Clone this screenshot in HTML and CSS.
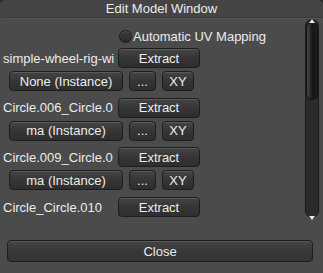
FILE: index.html
```html
<!DOCTYPE html>
<html lang="en">
<head>
    <meta charset="UTF-8">
    <meta name="viewport" content="width=device-width, initial-scale=1.0">
    <title>Edit Model Window</title>
    <link rel="stylesheet" href="styles.css">
</head>
<body>
    <div class="window">
        <div class="titlebar">Edit Model Window</div>

        <div class="pane">
            <div class="model-list">
                <div class="option">
                    <span class="radio"></span>Automatic UV Mapping
                </div>

                <div class="model-row">
                    <span class="model-name">simple-wheel-rig-wi</span>
                    <button class="btn btn-extract">Extract</button>
                </div>
                <div class="instance-row">
                    <button class="btn btn-instance">None (Instance)</button>
                    <button class="btn btn-more">...</button>
                    <button class="btn btn-xy">XY</button>
                </div>

                <div class="model-row">
                    <span class="model-name">Circle.006_Circle.0</span>
                    <button class="btn btn-extract">Extract</button>
                </div>
                <div class="instance-row">
                    <button class="btn btn-instance">ma (Instance)</button>
                    <button class="btn btn-more">...</button>
                    <button class="btn btn-xy">XY</button>
                </div>

                <div class="model-row">
                    <span class="model-name">Circle.009_Circle.0</span>
                    <button class="btn btn-extract">Extract</button>
                </div>
                <div class="instance-row">
                    <button class="btn btn-instance">ma (Instance)</button>
                    <button class="btn btn-more">...</button>
                    <button class="btn btn-xy">XY</button>
                </div>

                <div class="model-row">
                    <span class="model-name">Circle_Circle.010</span>
                    <button class="btn btn-extract">Extract</button>
                </div>
            </div>

            <div class="scrollbar">
                <span class="arrow arrow-up"></span>
                <div class="thumb"></div>
                <span class="arrow arrow-down"></span>
            </div>
        </div>

        <div class="footer">
            <button class="btn btn-close">Close</button>
        </div>
    </div>
</body>
</html>
```

FILE: styles.css
```css
* {
    margin: 0;
    padding: 0;
    box-sizing: border-box;
}

:root {
    --bg: #4b4b4b;
    --title-bg: #444444;
    --text: #ececec;
    --btn-border: #1d1d1d;
    --track: #2b2b2b;
}

body {
    width: 323px;
    height: 273px;
    overflow: hidden;
    background: #2a2a2a;
    font-family: "Liberation Sans", Arial, sans-serif;
    font-size: 13px;
    color: var(--text);
}

.window {
    width: 323px;
    height: 273px;
    background: var(--bg);
    border-radius: 6px 6px 0 0;
    display: flex;
    flex-direction: column;
}

.titlebar {
    height: 18px;
    line-height: 17px;
    text-align: center;
    background: var(--title-bg);
    border-radius: 6px 6px 0 0;
    border-bottom: 1px solid #3c3c3c;
}

.pane {
    height: 222px;
    display: flex;
    border-top: 1px solid #555;
    border-radius: 6px 6px 0 0;
}

.model-list {
    flex: 1;
    padding-left: 3px;
}

.option {
    display: flex;
    align-items: center;
    height: 14px;
    margin-top: 10px;
    margin-bottom: 5px;
    padding-left: 116px;
    white-space: nowrap;
}

.radio {
    width: 13px;
    height: 13px;
    margin-right: 1px;
    border-radius: 50%;
    border: 1px solid var(--btn-border);
    background: linear-gradient(#3c3c3c, #2b2b2b);
    box-shadow: inset 0 1px 0 rgba(255, 255, 255, 0.1);
}

.model-row {
    display: flex;
    align-items: center;
    height: 20px;
    margin-bottom: 3px;
}

.model-name {
    width: 115px;
    overflow: hidden;
    white-space: nowrap;
}

.instance-row {
    display: flex;
    gap: 6px;
    height: 20px;
    padding-left: 6px;
    margin-bottom: 6.7px;
}

.btn {
    height: 20px;
    font-family: inherit;
    font-size: 13px;
    color: var(--text);
    border: 1px solid var(--btn-border);
    border-radius: 4px;
    background: linear-gradient(#454545, #353535 50%, #2e2e2e);
    box-shadow: inset 0 1px 0 rgba(255, 255, 255, 0.12);
    text-align: center;
    cursor: pointer;
}

.btn-extract {
    width: 82px;
}

.btn-instance {
    width: 114px;
}

.btn-more {
    width: 27px;
}

.btn-xy {
    width: 32px;
}

.scrollbar {
    position: relative;
    width: 14px;
    height: 199px;
    margin-top: 0;
    margin-right: 4px;
    border: 1px solid #1b1b1b;
    border-radius: 7px;
    background: var(--track);
}

.thumb {
    margin-top: 2px;
    height: 78px;
    border-radius: 6px;
    background: linear-gradient(90deg, #4a4a4a 0%, #262626 35%, #151515 60%, #1e1e1e 100%);
    border: 1px solid #111;
}

.arrow {
    position: absolute;
    left: 3px;
    width: 0;
    height: 0;
    border-left: 3px solid transparent;
    border-right: 3px solid transparent;
}

.arrow-up {
    top: -1px;
    border-bottom: 4px solid #e8e8e8;
}

.arrow-down {
    bottom: -3px;
    border-top: 4px solid #e8e8e8;
}

.footer {
    padding: 0 10px 0 7px;
}

.btn-close {
    width: 306px;
    height: 22px;
    background: linear-gradient(#444444, #383838 50%, #333333);
}
```
